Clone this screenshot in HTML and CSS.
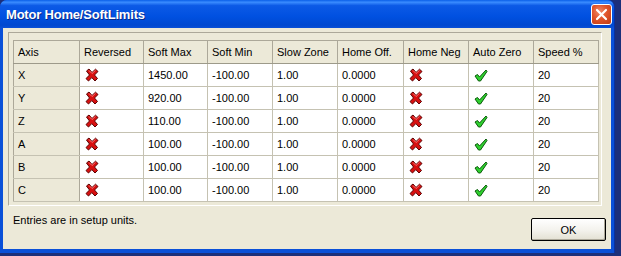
FILE: index.html
```html
<!DOCTYPE html>
<html lang="en">
<head>
    <meta charset="UTF-8">
    <title>Motor Home/SoftLimits</title>
    <link rel="stylesheet" href="styles.css">
</head>
<body>
    <div class="window">
        <div class="titlebar">
            <span class="title">Motor Home/SoftLimits</span>
            <button class="close-btn">
                <svg width="13" height="13" viewBox="0 0 13 13"><path d="M2 2 L11 11 M11 2 L2 11" stroke="white" stroke-width="2.2" stroke-linecap="round"/></svg>
            </button>
        </div>
        <div class="client">
            <div class="grid-frame">
                <table class="grid">
                    <tr class="head">
                        <th class="c-axis">Axis</th>
                        <th class="c-rev">Reversed</th>
                        <th class="c-max">Soft Max</th>
                        <th class="c-min">Soft Min</th>
                        <th class="c-slow">Slow Zone</th>
                        <th class="c-off">Home Off.</th>
                        <th class="c-neg">Home Neg</th>
                        <th class="c-auto">Auto Zero</th>
                        <th class="c-speed">Speed %</th>
                    </tr>
                </table>
            </div>
            <div class="footer">
                <span class="note">Entries are in setup units.</span>
                <button class="ok-btn">OK</button>
            </div>
        </div>
    </div>

    <script>
        const rows = [
            ["X", "1450.00"],
            ["Y", "920.00"],
            ["Z", "110.00"],
            ["A", "100.00"],
            ["B", "100.00"],
            ["C", "100.00"]
        ];

        // little red cross and green tick, like the old grid bitmaps
        const cross = '<svg class="ico" width="14" height="14" viewBox="0 0 14 14"><path d="M1.5 3 L4 1 L7 4.5 L10.5 1.2 L13 3.5 L9.5 7 L12.5 10.5 L10 13 L6.8 9.6 L3.5 13 L1 10.6 L4.5 7 Z" fill="#d81010" stroke="#5a0000" stroke-width="1"/><path d="M4 2.5 L7 5.5 L10.5 2.3" fill="none" stroke="#ff7070" stroke-width="1"/></svg>';
        const tick = '<svg class="ico" width="14" height="13" viewBox="0 0 14 13"><path d="M1 7 L3.5 5.5 L5.5 8 L12 1 L13 2.5 L6.5 12 L4.5 12 Z" fill="#2fd02f" stroke="#0a5a0a" stroke-width="1"/></svg>';

        const grid = document.querySelector('.grid');
        rows.forEach(function(r) {
            const tr = document.createElement('tr');
            tr.innerHTML =
                '<td class="axis">' + r[0] + '</td>' +
                '<td>' + cross + '</td>' +
                '<td>' + r[1] + '</td>' +
                '<td>-100.00</td>' +
                '<td>1.00</td>' +
                '<td>0.0000</td>' +
                '<td>' + cross + '</td>' +
                '<td>' + tick + '</td>' +
                '<td>20</td>';
            grid.appendChild(tr);
        });
    </script>
</body>
</html>
```

FILE: styles.css
```css
body { margin: 0; background: #1c2f7a; font-family: "Liberation Sans", Arial, sans-serif; font-size: 11px; color: #000; height: 256px; overflow: hidden; }
.window { width: 614px; height: 253px; background: #0a50d8; border-radius: 7px 7px 0 0; display: flex; flex-direction: column; border-right: 1px solid #0831a0; }
.titlebar { height: 28px; display: flex; align-items: center; justify-content: space-between; padding: 0 2px 0 6px; border-radius: 7px 7px 0 0;
    background: linear-gradient(to bottom, #0a5fe8 0%, #3a8cff 8%, #0c5ae6 20%, #0050e0 60%, #0048d0 90%, #0a50d8 100%); }
.title { color: #fff; font-weight: bold; font-size: 13px; letter-spacing: -0.2px; text-shadow: 1px 1px 0 #0a2a88; }
.close-btn { width: 21px; height: 21px; padding: 0; border: 1px solid #fff; border-radius: 3px; display: flex; align-items: center; justify-content: center;
    background: radial-gradient(circle at 40% 35%, #f08a6a 0%, #e0542a 45%, #c03a12 100%); }
.client { flex: 1; margin: 0 3px 4px 3px; background: #ece9d8; display: flex; flex-direction: column; }
.grid-frame { margin: 4px 0 0 5px; width: 588px; height: 165px; padding: 7px 0 0 4px; border: 1px solid; border-color: #aca899 #fff #fff #aca899; }
.grid { border-collapse: collapse; table-layout: fixed; width: 586px; }
.grid th, .grid td { height: 22px; padding: 0 0 0 4px; border: 1px solid #c5c2b2; text-align: left; font-weight: normal; white-space: nowrap; vertical-align: middle; }
.grid th { background: #ece9d8; border-color: #aca899; border-bottom-color: #9d9a8a; }
.grid td { background: #fff; }
.grid td.axis { background: #ece9d8; border-color: #c5c2b2 #aca899 #c5c2b2 #aca899; }
.grid .ico { display: block; margin-left: 1px; }
.c-axis { width: 61px; }
.c-rev { width: 59px; }
.c-max { width: 59px; }
.c-min { width: 60px; }
.c-slow { width: 60px; }
.c-off { width: 61px; }
.c-neg { width: 60px; }
.c-auto { width: 60px; }
.c-speed { width: 60px; }
.footer { flex: 1; display: flex; justify-content: space-between; align-items: flex-start; padding: 0 5px 0 10px; }
.note { margin-top: 8px; }
.ok-btn { margin-top: 12px; width: 75px; height: 23px; font-family: "Liberation Sans", Arial, sans-serif; font-size: 11px; color: #000;
    background: linear-gradient(to bottom, #fff 0%, #f4f3ee 50%, #e3e0d2 100%); border: 1px solid #000; border-radius: 2px; box-shadow: inset -1px -1px 0 #aca899; }
```
